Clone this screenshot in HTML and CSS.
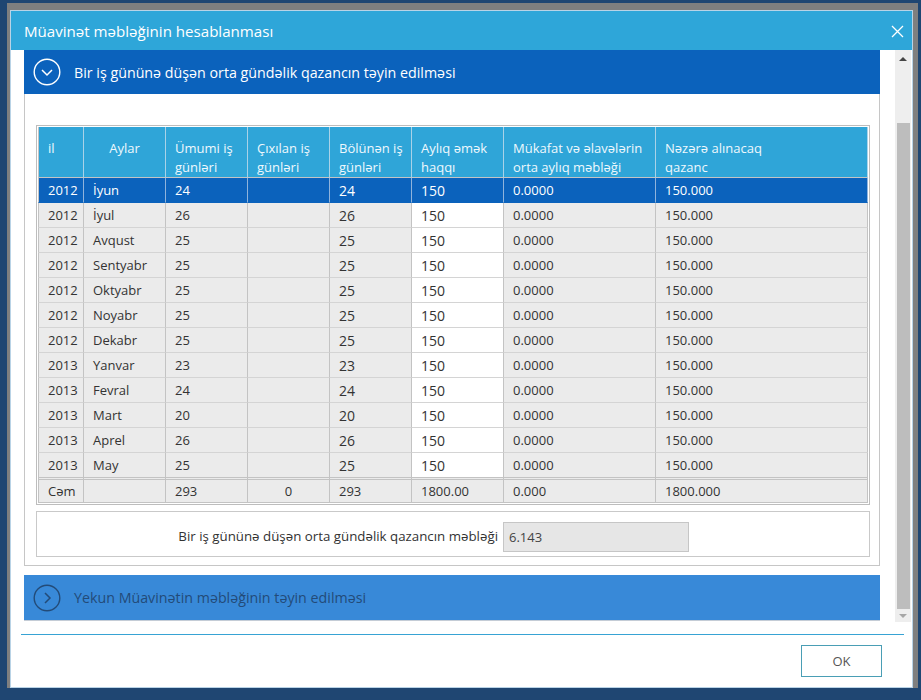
FILE: index.html
```html
<!DOCTYPE html>
<html lang="az">
<head>
<meta charset="utf-8">
<title>Müavinət məbləğinin hesablanması</title>
<link rel="stylesheet" href="styles.css">
</head>
<body>
<div class="frame">
  <div class="dialog">
    <div class="titlebar">
      <span class="title">Müavinət məbləğinin hesablanması</span>
      <svg class="close" width="13" height="13" viewBox="0 0 13 13"><path d="M1 1 L12 12 M12 1 L1 12" stroke="#fff" stroke-width="1.3" fill="none"/></svg>
    </div>
    <div class="body">
      <div class="scroll-content">
        <section class="panel">
          <div class="panel-head active">
            <svg class="toggle" width="28" height="28" viewBox="0 0 28 28"><circle cx="14" cy="14" r="12.8" stroke="#fff" stroke-width="1.4" fill="none"/><polyline points="9,12 14,17 19,12" stroke="#fff" stroke-width="1.5" fill="none"/></svg>
            <span>Bir iş gününə düşən orta gündəlik qazancın təyin edilməsi</span>
          </div>
          <div class="panel-body">
            <div class="grid-wrap">
              <table class="grid">
                <colgroup>
                  <col class="c-il"><col class="c-ay"><col class="c-n"><col class="c-n"><col class="c-n"><col class="c-ah"><col class="c-mk"><col class="c-nz">
                </colgroup>
                <thead>
                  <tr>
                    <th>il</th>
                    <th class="center">Aylar</th>
                    <th>Ümumi iş<br>günləri</th>
                    <th>Çıxılan iş<br>günləri</th>
                    <th>Bölünən iş<br>günləri</th>
                    <th>Aylıq əmək<br>haqqı</th>
                    <th>Mükafat və əlavələrin<br>orta aylıq məbləği</th>
                    <th>Nəzərə alınacaq<br>qazanc</th>
                  </tr>
                </thead>
                <tbody>
                  <tr class="selected"><td>2012</td><td>İyun</td><td>24</td><td></td><td class="big">24</td><td class="edit big">150</td><td>0.0000</td><td>150.000</td></tr>
                  <tr><td>2012</td><td>İyul</td><td>26</td><td></td><td class="big">26</td><td class="edit big">150</td><td>0.0000</td><td>150.000</td></tr>
                  <tr><td>2012</td><td>Avqust</td><td>25</td><td></td><td class="big">25</td><td class="edit big">150</td><td>0.0000</td><td>150.000</td></tr>
                  <tr><td>2012</td><td>Sentyabr</td><td>25</td><td></td><td class="big">25</td><td class="edit big">150</td><td>0.0000</td><td>150.000</td></tr>
                  <tr><td>2012</td><td>Oktyabr</td><td>25</td><td></td><td class="big">25</td><td class="edit big">150</td><td>0.0000</td><td>150.000</td></tr>
                  <tr><td>2012</td><td>Noyabr</td><td>25</td><td></td><td class="big">25</td><td class="edit big">150</td><td>0.0000</td><td>150.000</td></tr>
                  <tr><td>2012</td><td>Dekabr</td><td>25</td><td></td><td class="big">25</td><td class="edit big">150</td><td>0.0000</td><td>150.000</td></tr>
                  <tr><td>2013</td><td>Yanvar</td><td>23</td><td></td><td class="big">23</td><td class="edit big">150</td><td>0.0000</td><td>150.000</td></tr>
                  <tr><td>2013</td><td>Fevral</td><td>24</td><td></td><td class="big">24</td><td class="edit big">150</td><td>0.0000</td><td>150.000</td></tr>
                  <tr><td>2013</td><td>Mart</td><td>20</td><td></td><td class="big">20</td><td class="edit big">150</td><td>0.0000</td><td>150.000</td></tr>
                  <tr><td>2013</td><td>Aprel</td><td>26</td><td></td><td class="big">26</td><td class="edit big">150</td><td>0.0000</td><td>150.000</td></tr>
                  <tr class="last"><td>2013</td><td>May</td><td>25</td><td></td><td class="big">25</td><td class="edit big">150</td><td>0.0000</td><td>150.000</td></tr>
                </tbody>
                <tfoot>
                  <tr class="total"><td>Cəm</td><td></td><td>293</td><td class="center">0</td><td>293</td><td>1800.00</td><td>0.000</td><td>1800.000</td></tr>
                </tfoot>
              </table>
            </div>
            <div class="result">
              <span class="result-label">Bir iş gününə düşən orta gündəlik qazancın məbləği</span>
              <div class="result-input">6.143</div>
            </div>
          </div>
        </section>
        <div class="panel-head collapsed">
          <svg class="toggle" width="28" height="28" viewBox="0 0 28 28"><circle cx="14" cy="14" r="12.8" stroke="#234b78" stroke-width="1.4" fill="none"/><polyline points="12,9 17,14 12,19" stroke="#234b78" stroke-width="1.5" fill="none"/></svg>
          <span>Yekun Müavinətin məbləğinin təyin edilməsi</span>
        </div>
      </div>
      <div class="scrollbar">
        <div class="sb-btn"><span class="tri-up"></span></div>
        <div class="sb-thumb"></div>
        <div class="sb-btn down"><span class="tri-down"></span></div>
      </div>
    </div>
    <div class="footer">
      <div class="rule"></div>
      <div class="actions"><button class="ok" type="button">OK</button></div>
    </div>
  </div>
</div>
</body>
</html>
```
FILE: styles.css
```css
* { box-sizing: border-box; }
html, body { margin: 0; }
body {
  background: #1f4672;
  font-family: "Open Sans", "Noto Sans", "DejaVu Sans", sans-serif;
  height: 700px;
  overflow: hidden;
  color: #333;
}
.frame {
  margin: 3px 3px 0 7px;
  padding: 7px 5px 0 3px;
  background: #7f7f7f;
}
.dialog {
  width: 903px;
  height: 678px;
  background: #fff;
  border: 1px solid #b9d3e6;
  display: flex;
  flex-direction: column;
}
.titlebar {
  height: 39px;
  flex: none;
  background: #2ea6d9;
  display: flex;
  align-items: center;
  justify-content: space-between;
  padding: 0 8px 0 13px;
  color: #fff;
}
.title { font-size: 15.1px; padding-top: 1px; }
.close { display: block; margin-top: 2px; }

.body {
  display: flex;
  height: 572px;
  flex: none;
  padding-left: 13px;
}
.scroll-content {
  width: 856px;
  margin-right: 15px;
}
.panel-head {
  height: 44px;
  display: flex;
  align-items: center;
  gap: 13px;
  padding-left: 9px;
  font-size: 14.25px;
}
.toggle { display: block; flex: none; }
.panel-head.active { background: #0b62bc; color: #fff; }
.panel-head.collapsed {
  background: #3889d8;
  color: #234b78;
  height: 46px;
  margin-top: 9px;
  border-bottom: 1px solid #c4ccd6;
}
.panel-body {
  border: 1px solid #c6c6c6;
  border-top: 0;
  padding: 31px 9px 8px 11px;
}
.grid-wrap {
  border: 1px solid #bdbdbd;
  padding: 1px;
  height: 380px;
}
.grid {
  width: 830px;
  border-spacing: 0;
  table-layout: fixed;
  font-size: 13px;
}
.c-il { width: 46px; }
.c-ay { width: 82px; }
.c-n { width: 82px; }
.c-ah { width: 92px; }
.c-mk { width: 152px; }
.c-nz { width: 212px; }

.grid th {
  background: #2fa5d8;
  color: #eef8fd;
  font-weight: normal;
  text-align: left;
  vertical-align: top;
  padding: 12px 9px 0;
  line-height: 19px;
  border-right: 1px solid #a9d2e8;
  border-bottom: 1px solid #c4c4c4;
  white-space: nowrap;
}
.grid th:first-child { border-left: 1px solid #c4c4c4; }
.grid th.center, .grid td.center { text-align: center; }
.grid td {
  background: #ebebeb;
  line-height: 23px;
  padding: 1px 9px 0;
  border-right: 1px solid #c3c3c3;
  border-bottom: 1px solid #d4d4d4;
  white-space: nowrap;
  color: #333;
}
.grid td:first-child { border-left: 1px solid #c3c3c3; }
.grid td.edit { background: #fff; }
.grid td.big { font-size: 14px; }
.grid tr.selected td {
  background: #0b62bc;
  color: #fff;
  border-right-color: #8fb3dc;
  border-bottom-color: #0b62bc;
}
.grid tr.last td { border-bottom: 0; }
.grid tr.total td {
  border-top: 3px double #c3c3c3;
  border-bottom: 1px solid #c3c3c3;
  line-height: 21px;
}

.result {
  margin-top: 6px;
  height: 46px;
  border: 1px solid #c9c9c9;
  display: flex;
  align-items: flex-start;
  padding-top: 10px;
}
.result-label {
  width: 461px;
  text-align: right;
  font-size: 13.3px;
  line-height: 29px;
  color: #333;
}
.result-input {
  margin-left: 5px;
  width: 186px;
  height: 30px;
  background: #e6e6e6;
  border: 1px solid #c6c6c6;
  padding: 0 5px;
  line-height: 28px;
  font-size: 13px;
  color: #444;
}

.scrollbar {
  width: 16px;
  background: #eeeeee;
  display: flex;
  flex-direction: column;
  align-items: center;
}
.sb-btn {
  height: 16px;
  width: 100%;
  display: flex;
  justify-content: center;
  padding-top: 7px;
}
.sb-btn.down { height: 13px; padding-top: 5px; margin-top: auto; }
.tri-up {
  width: 0; height: 0;
  border-left: 4px solid transparent;
  border-right: 4px solid transparent;
  border-bottom: 4px solid #444;
}
.tri-down {
  width: 0; height: 0;
  border-left: 4px solid transparent;
  border-right: 4px solid transparent;
  border-top: 4px solid #a6a6a6;
}
.sb-thumb {
  margin-top: 57px;
  width: 13px;
  height: 486px;
  background: #bdbdbd;
}

.footer { flex: 1; }
.rule {
  margin: 12px 8px 0 10px;
  height: 1px;
  background: #37a3d4;
}
.actions {
  display: flex;
  justify-content: flex-end;
  padding: 10px 30px 0 0;
}
.ok {
  width: 81px;
  height: 32px;
  border: 1px solid #4a9eb5;
  background: #fff;
  color: #555;
  font-family: inherit;
  font-size: 13px;
  padding: 0;
}
```
